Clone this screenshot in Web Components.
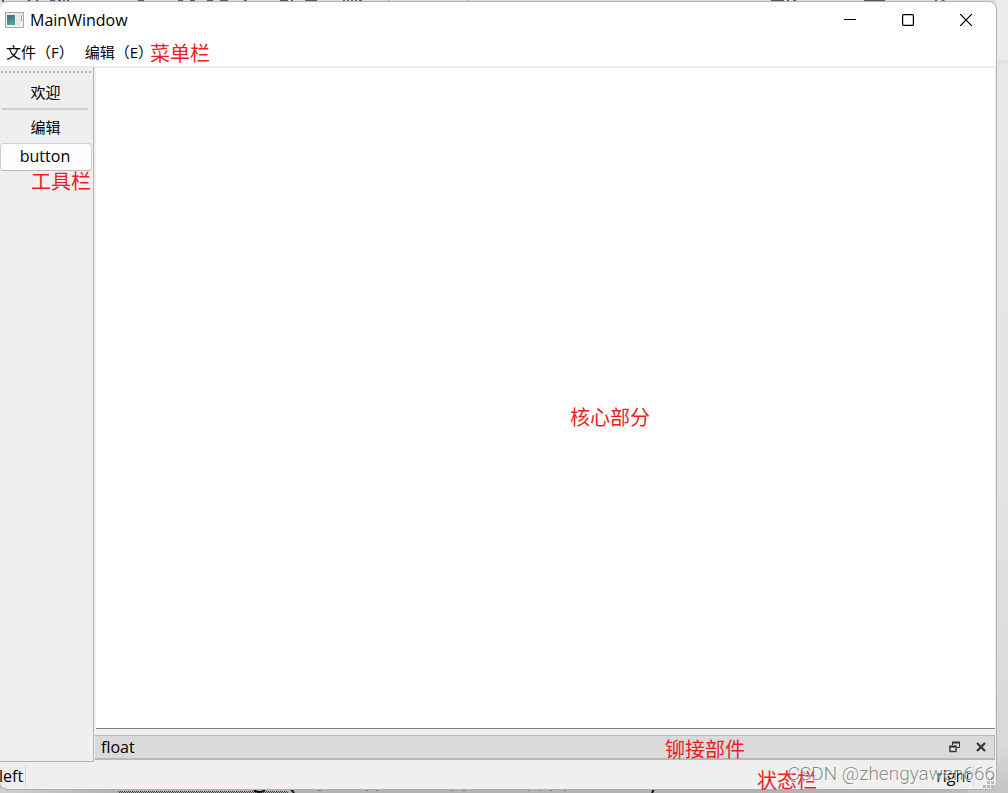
<!DOCTYPE html>
<html lang="zh-CN">
<head>
<meta charset="utf-8">
<title>MainWindow</title>
<style>
  html, body { height: 100%; margin: 0; }
  body {
    font: 16px/20px "Open Sans", "Noto Sans CJK SC", sans-serif;
    color: #000;
    overflow: hidden;
  }
</style>
</head>
<body>
<desk-top>
  <main-window>
    <title-bar slot="title">MainWindow</title-bar>
    <menu-bar slot="menu">
      <menu-entry>文件（F）</menu-entry>
      <menu-entry>编辑（E）</menu-entry>
      <red-note slot="note" style="--left:150px;--top:6px">菜单栏</red-note>
    </menu-bar>
    <tool-bar slot="tools">
      <tool-action>欢迎</tool-action>
      <tool-separator></tool-separator>
      <tool-action>编辑</tool-action>
      <push-button>button</push-button>
      <red-note style="--left:31px;--top:105px">工具栏</red-note>
    </tool-bar>
    <text-area slot="center"><red-note style="--left:474px;--top:340px">核心部分</red-note></text-area>
    <dock-title slot="dock">float<red-note slot="note" style="--left:570px;--top:4px">铆接部件</red-note></dock-title>
    <status-bar slot="status">
      <span>left</span>
      <span slot="right">right</span>
      <red-note slot="note" style="--left:757px;--top:9px">状态栏</red-note>
      <water-mark slot="note">CSDN @zhengyawen666</water-mark>
    </status-bar>
  </main-window>
</desk-top>

<script>
const define = (name, html) => {
  const template = document.createElement('template');
  template.innerHTML = html;
  customElements.define(name, class extends HTMLElement {
    constructor() {
      super();
      this.attachShadow({ mode: 'open' }).append(template.content.cloneNode(true));
    }
  });
};

define('desk-top', `
<style>
  :host { display: block; position: relative; box-sizing: border-box; height: 100vh; padding: 1px 11px 3px 0;
    background: linear-gradient(#ebebeb 0 60px, #dedede 61px, #e8e8e8 64px, #e4e4e4 60%, #d8d8d8 94%, #c4c4c4); }
  svg { position: absolute; left: 0; display: block; }
  .top { top: 0; }
  .bottom { bottom: 0; }
  .shade { position: absolute; left: 0; right: 40px; bottom: 0; height: 4px; background: linear-gradient(90deg, #d0d0d0, #b2b2b2 12%, #b2b2b2 94%, #bcbcbc); }
</style>
<div class="shade"></div>
<svg class="top" width="1008" height="2" aria-hidden="true">
  <rect width="996" height="2" fill="#dedede"/>
  <path d="M2 1h2M28 0l3 2M38 0l-2 2M50 1h5M58 1h3M63 1h2M67 1h2M138 1h6M178 1h5M190 1h5M207 1h6M220 1h8M244 1h3M280 1h8M291 1h2M305 1h12M343 1h2M347 1h2M351 1h2M355 1h2M359 1h3M771 1h13M787 1h2M793 1h3M864 1h21M935 1h2M942 0l3 2" stroke="#555966" stroke-width="2"/>
  <path d="M90 1h1M388 1h2M467 1h2M732 1h1M830 1h1M972 1h1" stroke="#bbb" stroke-width="2"/>
</svg>
<svg class="bottom" width="1008" height="4" aria-hidden="true">
  <path d="M118 2.5H288M119 3.5H289" stroke="#b41818" stroke-dasharray="1 1"/>
  <path d="M254 1q2 2 5 2t6-2M291 0l3 4M654 0l-2 4" fill="none" stroke="#111" stroke-width="2"/>
  <path d="M318 1h3M366 1h2M376 1h2M451 1h2M463 1h2M528 1h1M539 1h1M550 1h2M564 1h2" stroke="#555"/>
</svg>
<slot></slot>`);

define('main-window', `
<style>
  :host { position: relative; box-sizing: border-box; height: 100%; display: flex; flex-direction: column;
    background: #efefef; border: solid #b2b2b2; border-width: 1px 1px 1px 0; border-radius: 8px; }
  .body { flex: 1; min-height: 0; display: grid; grid-template-columns: 94px minmax(0, 1fr); column-gap: 1px; }
  .work { display: flex; flex-direction: column; gap: 6px; min-height: 0; padding: 0 1px 2px 0; }
</style>
<slot name="title"></slot>
<slot name="menu"></slot>
<div class="body">
  <slot name="tools"></slot>
  <div class="work"><slot name="center"></slot><slot name="dock"></slot></div>
</div>
<slot name="status"></slot>`);

define('title-bar', `
<style>
  :host { display: flex; align-items: center; height: 36px; background: #fff; padding: 0 1px 0 5px; border-radius: 8px 8px 0 0; }
  .icon { margin-right: 6px; }
  .name { flex: 1; }
  button { width: 58px; height: 36px; padding: 0; border: 0; background: none; display: grid; place-items: center; }
</style>
<svg class="icon" width="19" height="16" aria-hidden="true">
  <defs><linearGradient id="g" x2=".4" y2="1"><stop stop-color="#3c6791"/><stop offset="1" stop-color="#54a683"/></linearGradient></defs>
  <rect x=".5" y=".5" width="18" height="15" fill="#f1f1f1" stroke="#a4a9ae"/>
  <rect x="1" y="1" width="17" height="2" fill="#e3e8ee"/>
  <rect x="2" y="3" width="8" height="10" fill="url(#g)"/>
  <rect x="11" y="3" width="4" height="10" fill="#e6e8e9"/>
  <rect x="16" y="3" width="1" height="6" fill="#6fb590"/>
</svg>
<span class="name"><slot></slot></span>
<button aria-label="最小化"><svg width="12" height="12"><path d="M0 5.5h12" stroke="#000"/></svg></button>
<button aria-label="最大化"><svg width="12" height="12"><rect x=".6" y=".6" width="10.8" height="10.8" rx="1" fill="none" stroke="#000" stroke-width="1.2"/></svg></button>
<button aria-label="关闭"><svg width="12" height="12"><path d="M0 0l12 12M12 0L0 12" stroke="#000" stroke-width="1.2"/></svg></button>`);

define('menu-bar', `
<style>
  :host { position: relative; display: flex; align-items: center; gap: 11px; height: 28px; padding-left: 6px;
    background: #fff; border-bottom: 1px solid #ececec; }
</style>
<slot></slot><slot name="note"></slot>`);

define('menu-entry', `
<style>
  :host { display: block; }
  button { display: block; padding: 0; border: 0; background: none; color: inherit; font: inherit; font-size: 15px; white-space: nowrap; }
</style>
<button><slot></slot></button>`);

define('tool-bar', `
<style>
  :host { position: relative; display: flex; flex-direction: column; border: solid #b4b4b4; border-width: 0 1px 1px 0; }
  .grip { height: 2px; margin: 4px 2px 2px 1px; background: repeating-linear-gradient(90deg, #b8b8b8 0 2px, transparent 2px 4px); }
</style>
<div class="grip"></div>
<slot></slot>`);

define('tool-action', `
<style>
  :host { display: block; }
  button { display: block; width: 91px; height: 33px; padding: 0; border: 0; background: none; color: inherit; font: inherit; font-size: 15px; }
</style>
<button><slot></slot></button>`);

define('tool-separator', `
<style>:host { display: block; height: 2px; margin: 0 5px 0 2px; background: #cfcfcf; }</style>`);

define('push-button', `
<style>
  :host { display: block; }
  button { display: block; width: 92px; height: 28px; padding: 0 2px 2px 0; color: inherit; font: inherit;
    background: #fdfdfd; border: 1px solid #d0d0d0; border-bottom-color: #bababa; border-radius: 4px; }
</style>
<button><slot></slot></button>`);

define('text-area', `
<style>
  :host { position: relative; display: flex; flex: 1; min-height: 0; margin-left: 1px; margin-top: 1px;
    border-bottom: 1px solid #828282; background: #fff; }
  textarea { flex: 1; resize: none; border: 0; padding: 4px; background: #fff; font: inherit; outline: 0; }
</style>
<textarea aria-label="核心部分"></textarea>
<slot></slot>`);

define('dock-title', `
<style>
  :host { position: relative; display: flex; align-items: center; box-sizing: border-box; height: 25px; padding: 0 7px 0 6px;
    background: #dadada; border: solid #b6b9b6; border-width: 1px 1px 2px 0; }
  .name { flex: 1; }
  button { width: 12px; height: 12px; padding: 0; border: 0; background: none; margin-left: 14px; display: block; }
  svg { display: block; }
</style>
<span class="name"><slot></slot></span>
<button aria-label="浮动"><svg width="12" height="12"><path d="M3.5 4V1.5h7v5H8" fill="none" stroke="#333"/><path d="M3 1.5h8" stroke="#333" stroke-width="2"/><rect x="1" y="5.5" width="6" height="5" fill="#e4e4e4" stroke="#333" stroke-width="1.4"/><path d="M.5 5.5h7" stroke="#333" stroke-width="2"/></svg></button>
<button aria-label="关闭"><svg width="12" height="12"><path d="M2 2l8 8M10 2l-8 8" stroke="#333" stroke-width="2.2"/></svg></button>
<slot name="note"></slot>`);

define('status-bar', `
<style>
  :host { position: relative; display: flex; align-items: center; height: 27px; }
  ::slotted(span) { margin-left: -1px; }
  .line { width: 1px; height: 22px; background: #d9d9d9; margin: 0 2px; }
  .fill { flex: 1; }
  .grip { align-self: flex-end; margin: 0 2px 1px 7px; }
</style>
<slot></slot><i class="line"></i><span class="fill"></span>
<slot name="right"></slot><i class="line"></i>
<svg class="grip" width="11" height="11" fill="#bcbcbc" aria-hidden="true">
  <path d="M8 0h3v3h-3zM4 4h3v3h-3zM8 4h3v3h-3zM0 8h3v3h-3zM4 8h3v3h-3zM8 8h3v3h-3z"/>
</svg>
<slot name="note"></slot>`);

define('red-note', `
<style>
  :host { position: absolute; left: var(--left); top: var(--top); z-index: 1; white-space: nowrap; pointer-events: none;
    font-size: 20px; line-height: 20px; font-weight: 400; color: #ed1c24; }
</style>
<slot></slot>`);

define('water-mark', `
<style>
  :host { position: absolute; right: 1px; top: 2px; z-index: 2; white-space: nowrap; pointer-events: none;
    font: 19px/20px Roboto, sans-serif; font-weight: 300; color: rgba(110, 110, 110, .8); text-shadow: 1px 1px 1px #fff; }
</style>
<slot></slot>`);
</script>
</body>
</html>
